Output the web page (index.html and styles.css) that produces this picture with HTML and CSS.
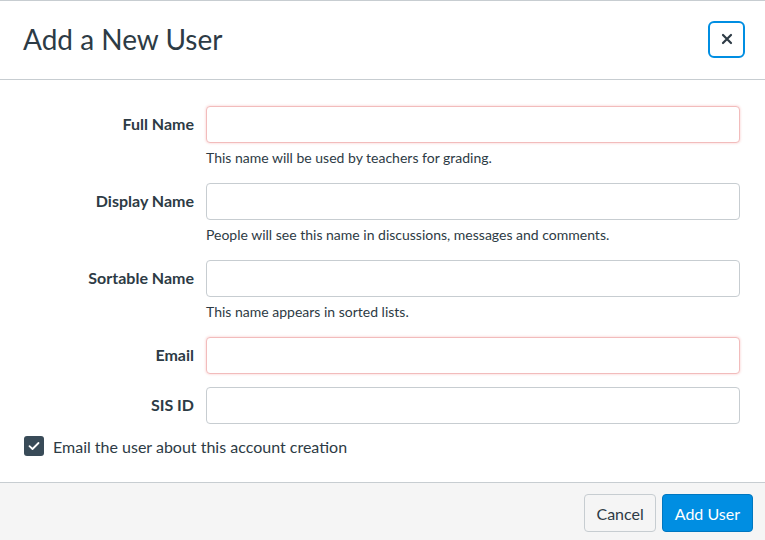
FILE: index.html
```html
<!DOCTYPE html>
<html>
<head>
<meta charset="utf-8">
<link rel="stylesheet" href="styles.css">
</head>
<body>
<div class="dialog">
  <header class="head">
    <h1 class="title">Add a New User</h1>
    <button class="close" aria-label="Close">
      <svg width="12" height="12" viewBox="0 0 12 12"><path d="M2 2 L10 10 M10 2 L2 10" stroke="#2d3b45" stroke-width="2.2" stroke-linecap="round"/></svg>
    </button>
  </header>
  <main class="body">
    <div class="form">
      <label class="label">Full Name</label>
      <div class="field">
        <input class="input invalid" type="text">
        <div class="help">This name will be used by teachers for grading.</div>
      </div>
      <label class="label">Display Name</label>
      <div class="field">
        <input class="input" type="text">
        <div class="help">People will see this name in discussions, messages and comments.</div>
      </div>
      <label class="label">Sortable Name</label>
      <div class="field">
        <input class="input" type="text">
        <div class="help">This name appears in sorted lists.</div>
      </div>
      <label class="label">Email</label>
      <div class="field">
        <input class="input invalid" type="text">
      </div>
      <label class="label">SIS ID</label>
      <div class="field">
        <input class="input" type="text">
      </div>
    </div>
    <label class="check">
      <span class="box"><svg width="12" height="10" viewBox="0 0 12 10"><path d="M1.5 5.2 L4.5 8 L10.5 2" fill="none" stroke="#fff" stroke-width="1.8" stroke-linecap="round" stroke-linejoin="round"/></svg></span>
      <span class="check-text">Email the user about this account creation</span>
    </label>
  </main>
  <footer class="foot">
    <button class="btn cancel">Cancel</button>
    <button class="btn primary">Add User</button>
  </footer>
</div>
</body>
</html>
```
FILE: styles.css
```css
html, body {
  margin: 0;
  padding: 0;
  background: #fff;
}
body {
  font-family: Lato, "Open Sans", sans-serif;
  color: #2d3b45;
}
.dialog {
  border-top: 1px solid #c7cdd1;
  width: 765px;
}
.head {
  height: 79px;
  border-bottom: 1px solid #c7cdd1;
  display: flex;
  align-items: center;
  justify-content: space-between;
  padding: 0 20px 2px 23px;
  box-sizing: border-box;
}
.title {
  margin: 0;
  font-size: 28px;
  font-weight: 400;
  line-height: 1;
  color: #2d3b45;
}
.close {
  width: 37px;
  height: 37px;
  border: 2px solid #008ee2;
  border-radius: 6px;
  background: #fff;
  display: flex;
  align-items: center;
  justify-content: center;
  padding: 0;
}
.body {
  padding: 26px 25px 26px 24px;
}
.form {
  display: grid;
  grid-template-columns: 170px 1fr;
  column-gap: 12px;
  row-gap: 13px;
}
.label {
  font-weight: 700;
  font-size: 16px;
  text-align: right;
  height: 37px;
  line-height: 35px;
  color: #2d3b45;
}
.field {
  display: flex;
  flex-direction: column;
}
.input {
  height: 37px;
  box-sizing: border-box;
  border: 1px solid #c7cdd1;
  border-radius: 4px;
  margin: 0;
  font: inherit;
  background: #fff;
}
.input.invalid {
  border-color: #f2bcbc;
  box-shadow: 0 0 2px 1px rgba(238, 110, 110, 0.18);
}
.help {
  font-size: 14px;
  line-height: 18px;
  margin-top: 6px;
  margin-bottom: 3px;
  color: #2d3b45;
}
.check {
  display: flex;
  align-items: center;
  gap: 9px;
  margin-top: 12px;
  height: 20px;
}
.box {
  width: 20px;
  height: 20px;
  border-radius: 3px;
  background: #394b58;
  display: flex;
  align-items: center;
  justify-content: center;
}
.check-text {
  font-size: 16px;
  color: #2d3b45;
}
.foot {
  border-top: 1px solid #c7cdd1;
  background: #f5f5f5;
  display: flex;
  justify-content: flex-end;
  gap: 6px;
  padding: 11px 12px 20px;
}
.btn {
  height: 38px;
  border-radius: 4px;
  font-family: Lato, "Open Sans", sans-serif;
  font-size: 16px;
  padding: 0 11px;
  cursor: pointer;
}
.cancel {
  background: #f5f5f5;
  border: 1px solid #c7cdd1;
  color: #2d3b45;
}
.primary {
  background: #008ee2;
  border: 1px solid #0077c0;
  color: #fff;
  padding: 0 12px;
}
```
